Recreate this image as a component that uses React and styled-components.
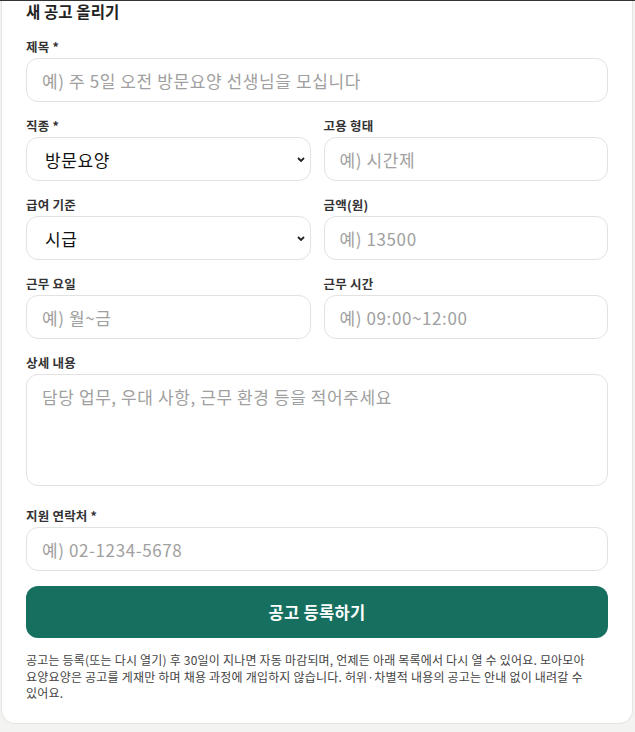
import styled, { createGlobalStyle } from "styled-components";

const GlobalStyle = createGlobalStyle`
	* {
		box-sizing: border-box;
	}
	body {
		margin: 0;
		background: #f3f4f2;
		font-family: "Noto Sans CJK KR", "Noto Sans", sans-serif;
		color: #222;
	}
`;

const Page = styled.div`
	border-top: 1px solid #333;
	padding: 0 2px 8px 1px;
`;

const Card = styled.form`
	background: #fff;
	border: 1px solid #e3e5e1;
	border-top: none;
	border-radius: 0 0 14px 14px;
	padding: 0 24px 21px;
`;

const Title = styled.h2`
	margin: 0 0 15px;
	font-size: 15.5px;
	line-height: 20px;
	font-weight: 700;
	letter-spacing: 0.1px;
	color: #222;
`;

const Field = styled.div`
	display: flex;
	flex-direction: column;
	min-width: 0;
`;

const Label = styled.label`
	font-size: 12.5px;
	line-height: 22px;
	font-weight: 600;
	letter-spacing: 0.2px;
	color: #333;
`;

const Grid = styled.div`
	display: grid;
	grid-template-columns: 1fr 1fr;
	column-gap: 13px;
	row-gap: 13px;
`;

const Stack = styled.div`
	display: flex;
	flex-direction: column;
	gap: 13px;
`;

const fieldBase = `
	width: 100%;
	border: 1px solid #e2e2e2;
	border-radius: 12px;
	background: #fff;
	font-family: "Noto Sans CJK KR", "Noto Sans", sans-serif;
	font-size: 17px;
	letter-spacing: 0.6px;
	color: #111;
	outline: none;
	&::placeholder {
		color: #a0a0a0;
	}
`;

const Input = styled.input`
	${fieldBase}
	height: 44px;
	padding: 0 15px;
`;

const Select = styled.select`
	${fieldBase}
	height: 44px;
	padding: 0 24px 0 18px;
	appearance: none;
	background-image: url("data:image/svg+xml,%3Csvg xmlns='http://www.w3.org/2000/svg' width='8' height='5' viewBox='0 0 8 5'%3E%3Cpath d='M1 1l3 3 3-3' fill='none' stroke='%23222' stroke-width='1.8'/%3E%3C/svg%3E");
	background-repeat: no-repeat;
	background-position: right 5px center;
	background-size: 8px 5px;
`;

const TextArea = styled.textarea`
	${fieldBase}
	display: block;
	height: 112px;
	padding: 10px 15px;
	line-height: 1.4;
	resize: none;
	margin-bottom: 6px;
`;

const Submit = styled.button`
	margin-top: 15px;
	width: 100%;
	height: 52px;
	border: none;
	border-radius: 12px;
	background: #17705f;
	color: #fff;
	font-family: "Noto Sans CJK KR", "Noto Sans", sans-serif;
	font-size: 16.5px;
	letter-spacing: 0.3px;
	font-weight: 700;
	cursor: pointer;
`;

const Note = styled.p`
	margin: 14px 0 0;
	font-size: 12px;
	line-height: 16.5px;
	letter-spacing: 0.2px;
	word-break: keep-all;
	color: #444;
`;

const App = () => {
	return (
		<>
			<GlobalStyle />
			<Page>
				<Card onSubmit={(e) => e.preventDefault()}>
					<Title>새 공고 올리기</Title>
					<Stack>
						<Field>
							<Label>제목 *</Label>
							<Input placeholder="예) 주 5일 오전 방문요양 선생님을 모십니다" />
						</Field>
						<Grid>
							<Field>
								<Label>직종 *</Label>
								<Select defaultValue="방문요양">
									<option>방문요양</option>
									<option>방문목욕</option>
									<option>주야간보호</option>
									<option>요양원</option>
								</Select>
							</Field>
							<Field>
								<Label>고용 형태</Label>
								<Input placeholder="예) 시간제" />
							</Field>
							<Field>
								<Label>급여 기준</Label>
								<Select defaultValue="시급">
									<option>시급</option>
									<option>일급</option>
									<option>월급</option>
								</Select>
							</Field>
							<Field>
								<Label>금액(원)</Label>
								<Input placeholder="예) 13500" />
							</Field>
							<Field>
								<Label>근무 요일</Label>
								<Input placeholder="예) 월~금" />
							</Field>
							<Field>
								<Label>근무 시간</Label>
								<Input placeholder="예) 09:00~12:00" />
							</Field>
						</Grid>
						<Field>
							<Label>상세 내용</Label>
							<TextArea placeholder="담당 업무, 우대 사항, 근무 환경 등을 적어주세요" />
						</Field>
						<Field>
							<Label>지원 연락처 *</Label>
							<Input placeholder="예) 02-1234-5678" />
						</Field>
					</Stack>
					<Submit type="submit">공고 등록하기</Submit>
					<Note>
						공고는 등록(또는 다시 열기) 후 30일이 지나면 자동 마감되며, 언제든 아래 목록에서
						다시 열 수 있어요. 모아모아 요양요양은 공고를 게재만 하며 채용 과정에 개입하지
						않습니다. 허위·차별적 내용의 공고는 안내 없이 내려갈 수 있어요.
					</Note>
				</Card>
			</Page>
		</>
	);
};

export default App;
